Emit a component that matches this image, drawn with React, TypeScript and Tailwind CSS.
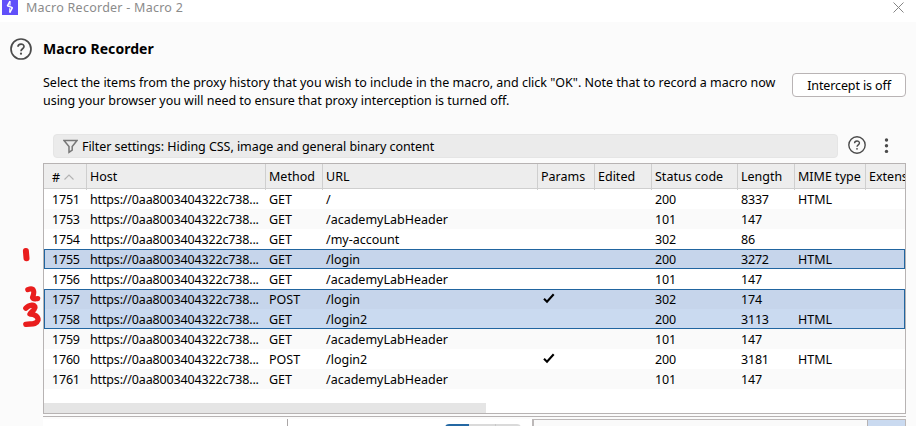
import React from "react";

type Row = {
  id: string;
  method: string;
  url: string;
  params?: boolean;
  status: string;
  length: string;
  mime?: string;
  look: string;
};

const sel = "border-[#2165a0] bg-[#c6d5eb]";

const rows: Row[] = [
  { id: "1751", method: "GET", url: "/", status: "200", length: "8337", mime: "HTML", look: "bg-white" },
  { id: "1753", method: "GET", url: "/academyLabHeader", status: "101", length: "147", look: "bg-[#fafafa]" },
  { id: "1754", method: "GET", url: "/my-account", status: "302", length: "86", look: "bg-white" },
  { id: "1755", method: "GET", url: "/login", status: "200", length: "3272", mime: "HTML", look: `${sel} border` },
  { id: "1756", method: "GET", url: "/academyLabHeader", status: "101", length: "147", look: "bg-white" },
  { id: "1757", method: "POST", url: "/login", params: true, status: "302", length: "174", look: `${sel} border border-b-0` },
  { id: "1758", method: "GET", url: "/login2", status: "200", length: "3113", mime: "HTML", look: "border border-t-0 border-[#2165a0] bg-[#cadaf0]" },
  { id: "1759", method: "GET", url: "/academyLabHeader", status: "101", length: "147", look: "bg-[#fafafa]" },
  { id: "1760", method: "POST", url: "/login2", params: true, status: "200", length: "3181", mime: "HTML", look: "bg-white" },
  { id: "1761", method: "GET", url: "/academyLabHeader", status: "101", length: "147", look: "bg-[#fafafa]" },
];

const grid = "grid grid-cols-[43px_179px_57px_215px_57px_57px_86px_57px_71px_39px]";

function Help({ className }: { className: string }) {
  return (
    <svg className={className} viewBox="0 0 22 22" fill="none" stroke="#4b4b4b">
      <circle cx="11" cy="11" r="10" strokeWidth="1.7" />
      <path d="M8 8.8 C8 5.2 14 5.2 14 8.6 C14 10.8 11 10.8 11 13.2" strokeWidth="1.7" />
      <circle cx="11" cy="15.7" r="1.1" fill="#4b4b4b" stroke="none" />
    </svg>
  );
}

function Tick() {
  return (
    <svg className="ml-[5px] mt-[4px] h-[11px] w-[12px]" viewBox="0 0 12 11" fill="none" stroke="#000">
      <path d="M1 5.8 L4 8.7 L10.7 1.2" strokeWidth="2.1" />
    </svg>
  );
}

function HeadCell({ children }: { children: React.ReactNode }) {
  return (
    <div className="overflow-hidden whitespace-nowrap border-r border-[#cfcfcf] pl-[3px] leading-[26px] last:border-r-0">
      {children}
    </div>
  );
}

export default function App() {
  return (
    <div className="relative flex h-[426px] w-[916px] flex-col overflow-hidden bg-[#fbfbfb] font-['Noto_Sans',sans-serif] text-[12.5px] text-black">
      <header className="flex h-[22px] shrink-0 items-start bg-white pl-[2px]">
        <svg className="h-[15px] w-4 shrink-0" viewBox="0 0 16 15">
          <rect width="16" height="15" fill="#6150fa" />
          <path d="M8 1.2 L5.4 5.8 L10.4 7.6 L7.8 12.6" fill="none" stroke="#fff" strokeWidth="1.5" strokeLinejoin="bevel" />
          <path d="M8 1.2 V5.4 M7.8 8.2 V12.6" stroke="#fff" strokeWidth="1.1" />
        </svg>
        <span className="ml-2 whitespace-nowrap text-[12.5px] leading-[15px] tracking-[0.25px] text-[#8b8b8b]">Macro Recorder - Macro 2</span>
        <svg className="ml-auto mr-[12px] mt-[2px] h-[11px] w-[11px]" viewBox="0 0 11 11" stroke="#858585">
          <path d="M.5 .5 L10.5 10.5 M10.5 .5 L.5 10.5" />
        </svg>
      </header>

      <section className="flex h-[112px] shrink-0">
        <Help className="ml-[10px] mt-4 h-[22px] w-[22px] shrink-0" />
        <div className="ml-[11px] mt-4 w-[749px] shrink-0">
          <h1 className="text-[14px] font-bold leading-[21px] tracking-[0.05px]">Macro Recorder</h1>
          <p className="mt-[15px] whitespace-nowrap leading-[18px] tracking-[-0.01px]">
            Select the items from the proxy history that you wish to include in the macro, and click "OK". Note that to record a macro now
            <br />
            <span className="tracking-[-0.03px]">using your browser you will need to ensure that proxy interception is turned off.</span>
          </p>
        </div>
        <button className="mt-[51px] h-6 w-[114px] shrink-0 rounded-[4px] border border-[#b9b4b5] bg-white leading-[24px] tracking-[-0.12px]">Intercept is off</button>
      </section>

      <div className="flex h-[29px] shrink-0 items-start pl-[53px]">
        <div className="flex h-6 w-[785px] items-center rounded-[4px] border border-[#e5e5e5] bg-[#ebebeb] pl-[9px]">
          <svg className="h-[15px] w-[15px]" viewBox="0 0 15 15" fill="none" stroke="#777" strokeWidth="1.5">
            <path d="M1 1.5 H14 L9.2 7.5 V11.2 L6 13.4 V7.5 Z" />
          </svg>
          <span className="ml-1 pt-[2px] leading-[22px] tracking-[-0.055px]">Filter settings: Hiding CSS, image and general binary content</span>
        </div>
        <Help className="ml-[10px] mt-[2px] h-[18px] w-[18px]" />
        <svg className="ml-[18px] mt-[4px] h-[16px] w-[5px]" viewBox="0 0 5 16" fill="#4b4b4b">
          <circle cx="2.5" cy="2" r="1.7" />
          <circle cx="2.5" cy="7.7" r="1.7" />
          <circle cx="2.5" cy="13.4" r="1.7" />
        </svg>
      </div>

      <div className="ml-[43px] h-[251px] w-[863px] shrink-0 border border-[#b7b3b3] bg-white">
        <div className={`${grid} h-[25px] border-b border-[#cfcfcf] bg-[#ededed]`}>
          <div className="flex items-center border-r border-[#cfcfcf] pl-2 leading-[24px]">
            <span className="pt-[2px]">#</span>
            <svg className="ml-1 h-[6px] w-[10px]" viewBox="0 0 10 6" fill="none" stroke="#b2b2b2">
              <path d="M.5 5.5 L5 1 L9.5 5.5" strokeWidth="1.1" />
            </svg>
          </div>
          <HeadCell>Host</HeadCell>
          <HeadCell>Method</HeadCell>
          <HeadCell>URL</HeadCell>
          <HeadCell>Params</HeadCell>
          <HeadCell>Edited</HeadCell>
          <HeadCell>Status code</HeadCell>
          <HeadCell>Length</HeadCell>
          <HeadCell>MIME type</HeadCell>
          <HeadCell>Extens</HeadCell>
        </div>
        {rows.map((r) => (
          <div key={r.id} className={`flex h-5 overflow-hidden ${r.look}`}>
            <div className={`${grid} w-[861px] shrink-0 whitespace-nowrap leading-[22px] ${r.look.includes("border") ? "-ml-px" : ""} ${r.look.includes("border") && !r.look.includes("border-t-0") ? "-mt-px" : ""}`}>
              <span className="pl-2 tracking-[-0.2px]">{r.id}</span>
              <span className="pl-[3px] tracking-[-0.16px]">https://0aa8003404322c738...</span>
              <span className="pl-[3px]">{r.method}</span>
              <span className="pl-[3px]">{r.url}</span>
              <span>{r.params && <Tick />}</span>
              <span />
              <span className="pl-[3px] tracking-[-0.1px]">{r.status}</span>
              <span className="pl-[3px] tracking-[-0.2px]">{r.length}</span>
              <span className="pl-[3px]">{r.mime}</span>
              <span />
            </div>
          </div>
        ))}
        <div className="mt-[14px] h-[10px] w-[442px] bg-[#e5e5e5]" />
      </div>

      <div className="ml-[43px] mt-[2px] h-[10px] w-[863px] shrink-0 border-t border-[#b7b3b3]">
        <div className="mt-[2px] flex h-[7px] bg-white">
          <div className="w-[245px] border-r border-[#aaa6a6]" />
          <div className="flex w-[244px] pl-[157px] pt-[5px]">
            <div className="h-4 w-6 rounded-tl-[4px] bg-[#2468a3]" />
            <div className="h-4 w-[27px] border-r border-[#c8c8c8] bg-[#dadada]" />
            <div className="h-4 w-[25px] rounded-tr-[4px] bg-[#dadada]" />
          </div>
          <div className="flex flex-1 border-l-2 border-r border-t border-[#bcb8b8] bg-[#fafafa]">
            <div className="ml-auto w-[38px] border-l border-[#b7b3b3] bg-[#cadaf0]" />
          </div>
        </div>
      </div>

      <svg className="pointer-events-none absolute left-[18px] top-[240px] h-[92px] w-[28px]" viewBox="18 240 28 92" fill="none" stroke="#e91d1d" strokeLinecap="round" strokeLinejoin="round">
        <path d="M25.9 251 L26.5 258.3" strokeWidth="6" />
        <path d="M27.8 289.6 C34 287.5 35 291 32.5 297.5 C33.5 300 36 298.5 37.7 298.6" strokeWidth="5.2" />
        <path d="M25.8 308.3 C29 304.5 35.5 304 35 307.5 C34.5 310 31.5 312 30 314 C35 314 38.5 317 38 320.3 C36.5 325 31 323.5 25.8 324.3" strokeWidth="5.3" />
      </svg>
    </div>
  );
}
